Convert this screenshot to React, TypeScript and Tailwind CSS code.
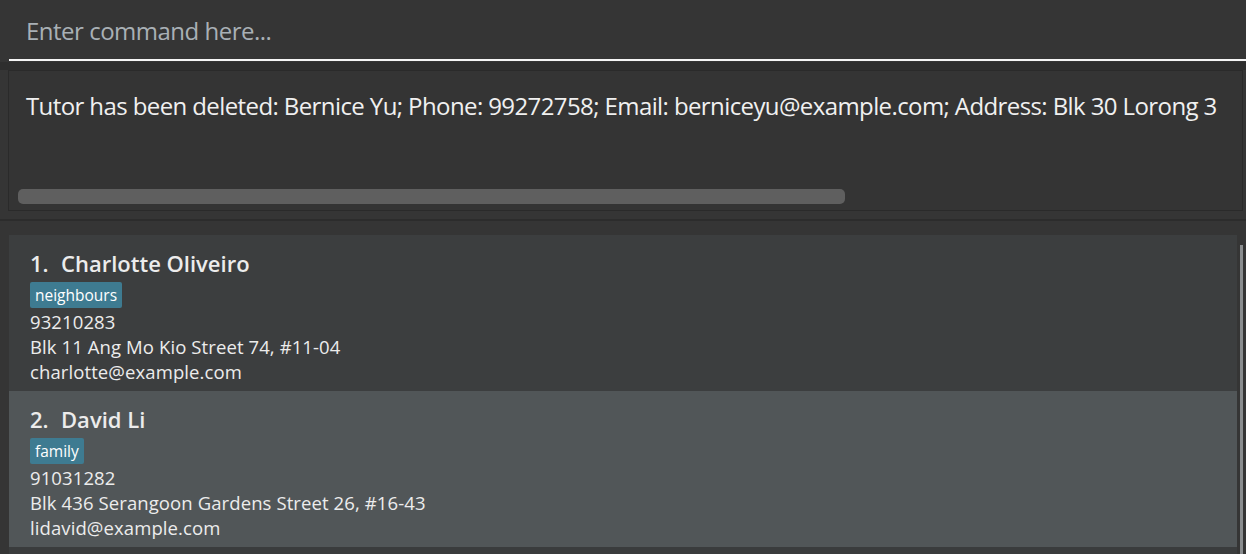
import React from "react";

const font = { fontFamily: '"Open Sans", "Noto Sans", sans-serif' };

type Person = { idx: number; name: string; tag: string; phone: string; address: string; email: string };

const people: Person[] = [
  { idx: 1, name: "Charlotte Oliveiro", tag: "neighbours", phone: "93210283", address: "Blk 11 Ang Mo Kio Street 74, #11-04", email: "charlotte@example.com" },
  { idx: 2, name: "David Li", tag: "family", phone: "91031282", address: "Blk 436 Serangoon Gardens Street 26, #16-43", email: "lidavid@example.com" },
];

function Card({ p, odd }: { p: Person; odd: boolean }) {
  return (
    <div className={`h-[156px] pl-[21px] pt-[13px] ${odd ? "bg-[#515658]" : "bg-[#3c3e3f]"}`}>
      <div className="flex text-[22px] leading-[30px] font-semibold text-[#ececec]">
        <span className="w-[31px]">{p.idx}.</span>
        <span>{p.name}</span>
      </div>
      <div className="flex mt-[4px]">
        <span className="bg-[#3e7b91] text-white text-[15.5px] leading-[26px] px-[5px] rounded-[2px]">{p.tag}</span>
      </div>
      <div className="text-[18.5px] leading-[25px] text-[#ececec] mt-[1px] tracking-[0.1px]">
        <div>{p.phone}</div>
        <div>{p.address}</div>
        <div>{p.email}</div>
      </div>
    </div>
  );
}

export default function App() {
  return (
    <div className="w-[1246px] h-[554px] bg-[#353535] overflow-hidden flex flex-col" style={font}>
      <div className="h-[62px] pl-[9px] flex flex-col">
        <div className="flex-1 flex items-center pl-[17px] pt-[2px] text-[24px] text-[#a9b0b5] tracking-[-0.5px]">
          Enter command here...
        </div>
        <div className="h-[2px] bg-[#f5f5f5] mb-[1px]" />
      </div>
      <div className="h-[8px] bg-[#2e2e2e]" />
      <div className="mx-[8px] mr-[3px] h-[141px] border border-[#2a2a2a] bg-[#343434] flex flex-col">
        <div className="pl-[17px] pt-[19px] text-[24px] leading-[32px] text-[#f0f0f0] whitespace-nowrap overflow-hidden tracking-[-0.6px]">
          Tutor has been deleted: Bernice Yu; Phone: 99272758; Email: berniceyu@example.com; Address: Blk 30 Lorong 3
        </div>
        <div className="flex-1" />
        <div className="ml-[9px] mb-[6px] w-[827px] h-[15px] rounded-[5px] bg-[#5f5f5f]" />
      </div>
      <div className="h-[8px]" />
      <div className="h-[2px] bg-[#2c2c2c]" />
      <div className="h-[14px]" />
      <div className="flex flex-1">
        <div className="ml-[9px] w-[1228px] flex flex-col">
          {people.map((p, i) => (
            <Card key={p.idx} p={p} odd={i % 2 === 1} />
          ))}
          <div className="flex-1 bg-[#3a3c3d]" />
        </div>
        <div className="ml-[3px] mt-[10px] w-[3px] bg-[#8a8d8f]" />
      </div>
    </div>
  );
}
